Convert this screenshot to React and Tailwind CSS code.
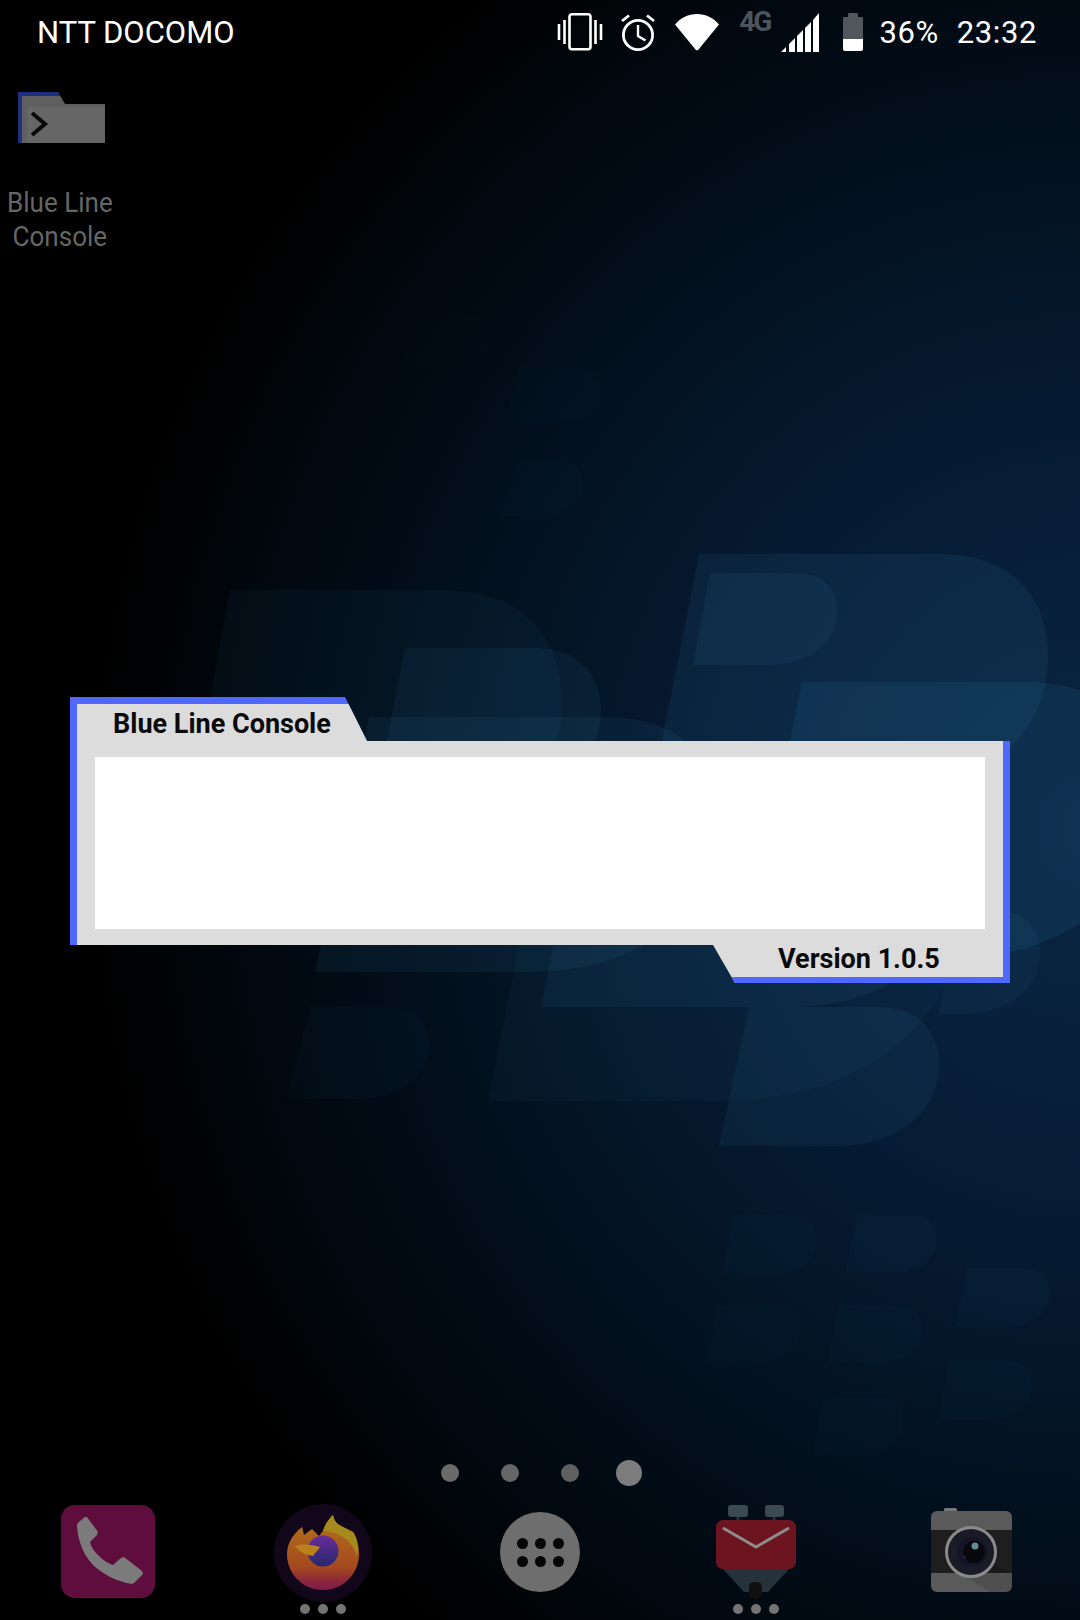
const roboto = "font-['Roboto',sans-serif]"

function dropPath({ tx, ty, bx, by, rx }) {
  const k = by - ty
  return `M${tx} ${ty}H${rx - k * 0.45}C${rx - k * 0.1} ${ty} ${rx} ${ty + k * 0.22} ${rx} ${ty + k * 0.42}C${rx} ${ty + k * 0.75} ${rx - k * 0.3} ${by} ${rx - k * 0.75} ${by}H${bx}Z`
}

const bigShapes = [
  { tx: 699, ty: 554, bx: 650, by: 800, rx: 1048, o: 0.09 },
  { tx: 710, ty: 573, bx: 693, by: 665, rx: 837, o: 0.08 },
  { tx: 802, ty: 682, bx: 745, by: 960, rx: 1150, o: 0.1 },
  { tx: 586, ty: 780, bx: 541, by: 1007, rx: 960, o: 0.08 },
  { tx: 749, ty: 1007, bx: 719, by: 1146, rx: 939, o: 0.08 },
  { tx: 552, ty: 780, bx: 488, by: 1101, rx: 960, o: 0.045 },
  { tx: 405, ty: 648, bx: 375, by: 800, rx: 601, o: 0.08 },
  { tx: 230, ty: 590, bx: 180, by: 860, rx: 562, o: 0.05 },
  { tx: 369, ty: 717, bx: 315, by: 972, rx: 720, o: 0.08 },
  { tx: 310, ty: 1006, bx: 286, by: 1099, rx: 429, o: 0.035 },
  { tx: 955, ty: 910, bx: 939, by: 1014, rx: 1040, o: 0.06 },
]

const smallShapes = [
  { tx: 733, ty: 1215, bx: 723, by: 1275, rx: 817, o: 0.025 },
  { tx: 857, ty: 1215, bx: 845, by: 1273, rx: 937, o: 0.03 },
  { tx: 967, ty: 1268, bx: 955, by: 1327, rx: 1050, o: 0.03 },
  { tx: 717, ty: 1305, bx: 707, by: 1363, rx: 800, o: 0.02 },
  { tx: 838, ty: 1305, bx: 828, by: 1363, rx: 922, o: 0.025 },
  { tx: 948, ty: 1360, bx: 938, by: 1420, rx: 1032, o: 0.025 },
  { tx: 822, ty: 1397, bx: 812, by: 1455, rx: 903, o: 0.02 },
  { tx: 518, ty: 367, bx: 505, by: 423, rx: 601, o: 0.02 },
  { tx: 518, ty: 460, bx: 500, by: 516, rx: 583, o: 0.02 },
  { tx: 411, ty: 313, bx: 400, by: 367, rx: 488, o: 0.012 },
]

function Wallpaper() {
  return (
    <svg className="absolute inset-0" width="1080" height="1620" viewBox="0 0 1080 1620">
      {[...bigShapes, ...smallShapes].map((shape) => (
        <path key={`${shape.tx}-${shape.ty}`} d={dropPath(shape)} fill="#3f9ad0" fillOpacity={shape.o} />
      ))}
    </svg>
  )
}

function VibrateIcon() {
  return (
    <svg width="46" height="38" viewBox="0 0 46 38" fill="none" stroke="#fff" strokeWidth="2.6">
      <rect x="12.5" y="1.3" width="21" height="35" rx="2.5" />
      <path d="M2 11v16M7.5 7v24M38.5 7v24M44 11v16" />
    </svg>
  )
}

function AlarmIcon() {
  return (
    <svg width="36" height="38" viewBox="0 0 36 38" fill="none" stroke="#fff" strokeWidth="2.8">
      <circle cx="18" cy="22" r="14.6" />
      <path d="M18 12v11l7.5 4.5" strokeWidth="2.4" />
      <path d="M2 8l7-5.5M34 8l-7-5.5" />
    </svg>
  )
}

function WifiIcon() {
  return (
    <svg width="44" height="37" viewBox="0 0 44 37" fill="#fff">
      <path d="M0 10.5C5.5 4 13.5 0 22 0s16.500 4 22 10.500L23.500 35.500a2 2 0 0 1-3 0Z" />
    </svg>
  )
}

function SignalIcon() {
  return (
    <svg width="38" height="39" viewBox="0 0 38 39" fill="#fff">
      <path d="M0 39l5-5v5ZM8 31l6-6v14H8ZM16 23l6-6v22h-6ZM24 15l6-6v30h-6ZM32 7l6-7v39h-6Z" />
    </svg>
  )
}

function BatteryIcon() {
  return (
    <div className="flex h-[38px] w-[20px] flex-col items-center">
      <div className="h-[4px] w-[10px] rounded-t-[1px] bg-[#51555c]" />
      <div className="w-full flex-1 rounded-t-[1px] bg-[#51555c]" />
      <div className="h-[12px] w-full rounded-b-[2px] bg-white" />
    </div>
  )
}

function StatusBar() {
  return (
    <div className={`flex h-[64px] items-center justify-between pl-[37px] pr-[43px] text-[31px] leading-none text-white ${roboto}`}>
      <span>NTT DOCOMO</span>
      <div className="flex items-center">
        <div className="mr-[17px] flex h-[64px] items-center"><VibrateIcon /></div>
        <div className="mr-[19px]"><AlarmIcon /></div>
        <div className="mr-[20px]"><WifiIcon /></div>
        <span className="mb-[21px] mr-[11px] text-[28px] font-bold tracking-[-2px] text-[#4f545c]">4G</span>
        <div className="mr-[24px]"><SignalIcon /></div>
        <div className="mr-[16px]"><BatteryIcon /></div>
        <span className="tracking-[0.6px]">36%</span>
        <span className="ml-[18px] tracking-[0.6px]">23:32</span>
      </div>
    </div>
  )
}

function ConsoleShortcut() {
  return (
    <div className="flex w-[120px] flex-col items-center pt-[28px]">
      <svg className="ml-[18px] self-start" width="87" height="51" viewBox="0 0 87 51">
        <path d="M0 0h40l7 12h40v39H0Z" fill="#5f5f5f" />
        <path d="M0 0h40l2.200 4H4v47H0Z" fill="#1f2f80" />
        <path d="M9 15h78v36H9Z" fill="#666" />
        <path d="M14 21l13 11-13 11" fill="none" stroke="#0a0a0a" strokeWidth="4" />
      </svg>
      <p className={`mt-[43px] scale-x-[0.93] text-center text-[28px] leading-[34px] text-[#666] ${roboto}`}>
        Blue Line<br />Console
      </p>
    </div>
  )
}

function BlueLineWidget() {
  return (
    <div className={`ml-[70px] w-[940px] font-bold text-[#0a0a0a] ${roboto}`}>
      <div className="h-[44px] w-[297px] bg-[#5068ff] pl-[7px] pt-[7px] [clip-path:polygon(0_0,275px_0,297px_44px,0_44px)]">
        <div className="h-full bg-[#dcdcdc] pl-[36px] text-[27px] leading-[40px]">Blue Line Console</div>
      </div>
      <div className="h-[204px] border-x-[7px] border-[#5068ff] bg-[#dcdcdc] px-[18px] py-[16px]">
        <div className="h-full bg-white" />
      </div>
      <div className="ml-auto h-[38px] w-[297px] border-r-[7px] border-b-[6px] border-[#5068ff] bg-[#dcdcdc] pl-[65px] text-[27px] leading-[29px] [clip-path:polygon(0_0,100%_0,100%_100%,22px_100%)]">
        Version 1.0.5
      </div>
    </div>
  )
}

function PageDots() {
  return (
    <div className="flex h-[26px] items-center pl-[441px]">
      <span className="h-[18px] w-[18px] rounded-full bg-[#6a6a6a]" />
      <span className="ml-[42px] h-[18px] w-[18px] rounded-full bg-[#666]" />
      <span className="ml-[42px] h-[18px] w-[18px] rounded-full bg-[#606060]" />
      <span className="ml-[37px] h-[26px] w-[26px] rounded-full bg-[#7c7c7c]" />
    </div>
  )
}

function PhoneApp() {
  return (
    <div className="flex h-[93px] w-[94px] items-center justify-center rounded-[14px] bg-[#5f0d3c]">
      <svg width="72" height="72" viewBox="0 0 72 72" fill="#7b7b7b">
        <path d="M8 5c-2 1-3 3-3 5 1 16 7 30 17 40 10 9 24 16 38 18l2-1 9-9-1-3-18-14-3 1-8 7c-6-2-10-5-14-9-4-4-8-9-9-14l7-7 1-3L15 1h-2Z" />
      </svg>
    </div>
  )
}

function FirefoxApp() {
  return (
    <div className="flex h-[98px] w-[98px] items-center justify-center rounded-full bg-[#12071a]">
      <svg width="76" height="78" viewBox="0 0 76 78">
        <defs>
          <linearGradient id="ffBody" x1="0" y1="0" x2="0" y2="1">
            <stop offset="0" stopColor="#b5731a" />
            <stop offset="0.7" stopColor="#a4491f" />
            <stop offset="0.86" stopColor="#8e2a38" />
            <stop offset="1" stopColor="#7f1b4c" />
          </linearGradient>
          <linearGradient id="ffGlobe" x1="0" y1="0" x2="0" y2="1">
            <stop offset="0" stopColor="#6a2c98" />
            <stop offset="1" stopColor="#25296e" />
          </linearGradient>
        </defs>
        <path d="M2 40C2 30 7 21 17 13l2 8 8-6 7 7 4-5C40 10 44 5 48 1c1 6 4 9 8 11l12 6c4 6 6 14 6 22 0 20-16 36-36 36S2 60 2 40Z" fill="url(#ffBody)" />
        <path d="M38 17C40 10 44 5 48 1c1 6 4 9 8 11l12 6c4 6 6 14 4 24-4-14-16-24-34-25Z" fill="#a58a1e" />
        <circle cx="38" cy="37" r="15.500" fill="url(#ffGlobe)" />
        <path d="M10 32c8-3 18-1 25 1-2 3-5 6-7 9-7-1-14-4-18-10Z" fill="#b9821c" />
      </svg>
    </div>
  )
}

function AllAppsButton() {
  return (
    <div className="grid h-[80px] w-[80px] grid-cols-3 content-center justify-items-center gap-y-[7px] rounded-full bg-[#6e6e6e] px-[13px]">
      {[0, 1, 2, 3, 4, 5].map((dot) => (
        <span key={dot} className="h-[11px] w-[11px] rounded-full bg-[#050505]" />
      ))}
    </div>
  )
}

function MailApp() {
  return (
    <svg width="80" height="94" viewBox="0 0 80 94">
      <rect x="12" y="0" width="20" height="12" rx="3" fill="#3b4a52" />
      <rect x="49" y="0" width="19" height="12" rx="3" fill="#3b4a52" />
      <path d="M22 12v4M58 12v4" stroke="#263239" strokeWidth="3" />
      <path d="M7 64h66L52 87H28Z" fill="#263239" />
      <rect x="33" y="77" width="13" height="17" rx="5" fill="#101010" />
      <rect x="0" y="15" width="80" height="49" rx="7" fill="#6c1420" />
      <path d="M7 23l33 19 33-19" fill="none" stroke="#8c8c8c" strokeWidth="3" />
    </svg>
  )
}

function CameraApp() {
  return (
    <svg width="81" height="84" viewBox="0 0 81 84">
      <rect x="13" y="0" width="13" height="5" rx="1.500" fill="#777" />
      <rect x="0" y="3" width="81" height="81" rx="6" fill="#5a5a5a" />
      <rect x="0" y="22" width="81" height="43" fill="#1e1e1e" />
      <path d="M40 44l41 21v19H60L26 65Z" fill="#000" fillOpacity="0.12" />
      <circle cx="40" cy="44" r="24.500" fill="#1b1b28" stroke="#8a8a8a" strokeWidth="3" />
      <circle cx="41" cy="44" r="15" fill="#15152a" />
      <circle cx="43" cy="44" r="11" fill="#07070d" />
      <circle cx="44" cy="38" r="3.500" fill="#5f8f90" />
      <circle cx="33" cy="49" r="1.500" fill="#2a2a2a" />
    </svg>
  )
}

function MoreDots({ className }) {
  return (
    <div className={`flex h-[10px] justify-center gap-[8px] ${className}`}>
      <span className="h-[10px] w-[10px] rounded-full bg-[#747474]" />
      <span className="h-[10px] w-[10px] rounded-full bg-[#747474]" />
      <span className="h-[10px] w-[10px] rounded-full bg-[#747474]" />
    </div>
  )
}

function Dock() {
  return (
    <div className="relative flex h-[115px] items-start">
      <div className="ml-[61px] mt-[1px]"><PhoneApp /></div>
      <div className="ml-[119px] flex w-[98px] flex-col items-center">
        <FirefoxApp />
        <MoreDots className="mt-[2px]" />
      </div>
      <div className="ml-[128px] mt-[8px]"><AllAppsButton /></div>
      <div className="ml-[136px] mt-[1px] flex w-[80px] flex-col items-center">
        <MailApp />
        <MoreDots className="mt-[5px]" />
      </div>
      <div className="ml-[135px] mt-[4px]"><CameraApp /></div>
    </div>
  )
}

export default function App() {
  return (
    <div className="relative h-[1620px] w-[1080px] overflow-hidden bg-black bg-[radial-gradient(ellipse_1000px_1050px_at_1090px_830px,#0a2644_0%,#061b33_38%,#031221_62%,#01080f_84%,#000_100%)]">
      <Wallpaper />
      <div className="relative flex h-full flex-col">
        <StatusBar />
        <ConsoleShortcut />
        <div className="mt-[443px]"><BlueLineWidget /></div>
        <div className="mt-[477px]"><PageDots /></div>
        <div className="mt-[18px]"><Dock /></div>
      </div>
    </div>
  )
}
